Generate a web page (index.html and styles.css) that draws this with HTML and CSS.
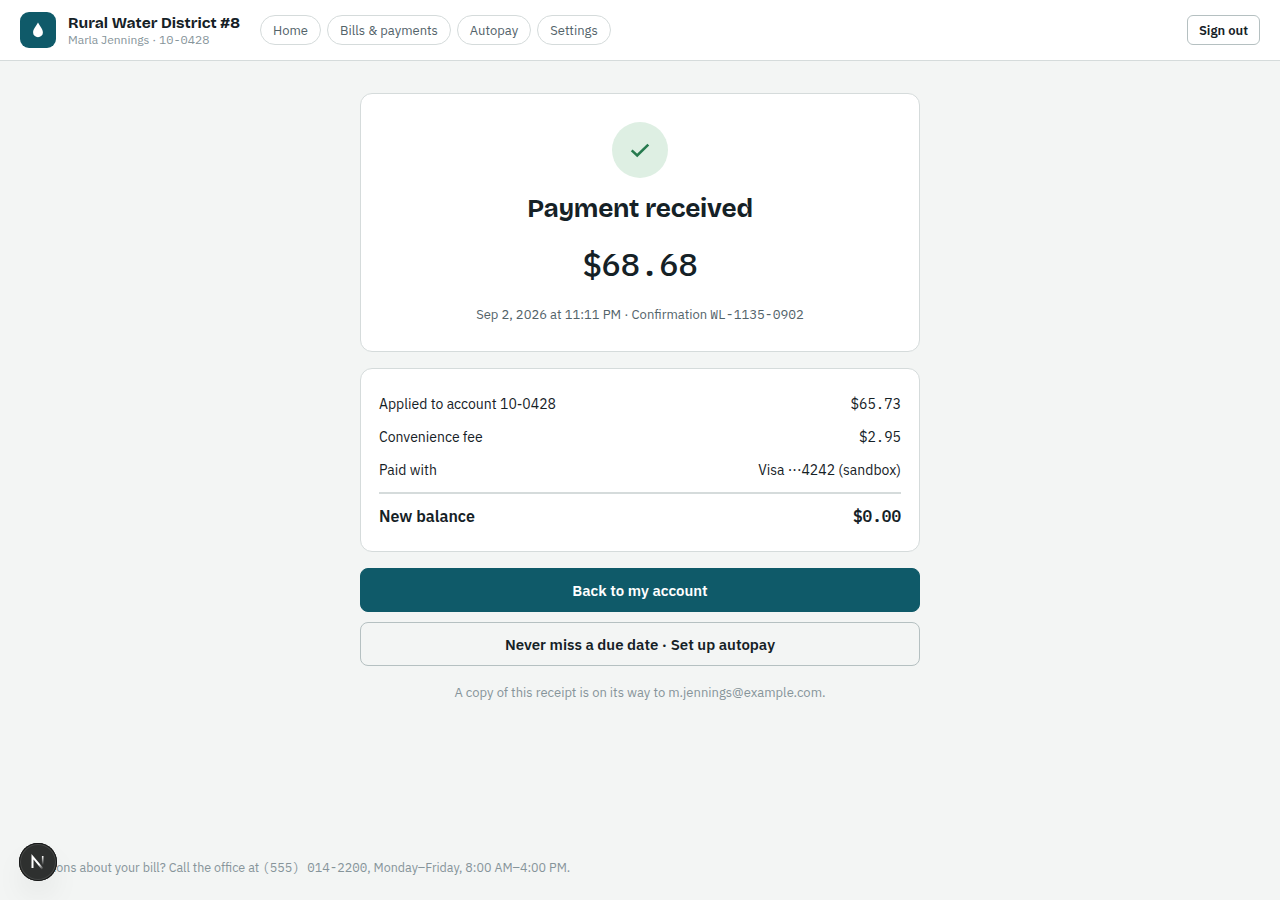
FILE: index.html
```
<!DOCTYPE html>
<html lang="en">
<head>
    <meta charset="UTF-8" />
    <meta name="viewport" content="width=device-width, initial-scale=1" />
    <title>Payment received</title>
    <link rel="stylesheet" href="styles.css">
</head>
<body>
    <header class="header">
        <div class="logo">
            <svg width="10" height="16" viewBox="0 0 10 16"><path d="M5 .6C6.3 3.5 9.900 6.900 9.900 10.400a4.900 4.900 0 0 1-9.800 0C.1 6.900 3.700 3.500 5 .6Z" fill="#fff" /></svg>
        </div>
        <div class="brand">
            <div class="brand-name">Rural Water District #8</div>
            <div class="brand-account">Marla Jennings · <span class="mono">10-0428</span></div>
        </div>
        <nav class="nav">
            <a class="pill home">Home</a>
            <a class="pill bills">Bills &amp; payments</a>
            <a class="pill auto">Autopay</a>
            <a class="pill settings">Settings</a>
        </nav>
        <button class="signout">Sign out</button>
    </header>

    <main class="main">
        <section class="card received">
            <div class="check">
                <svg width="24" height="24" viewBox="0 0 24 24" fill="none" stroke="#267a4e" stroke-width="2.6"><path d="M3.700 12.400 9.200 17.400 20.300 6.600" /></svg>
            </div>
            <h1>Payment received</h1>
            <div class="amount mono">$68.68</div>
            <div class="confirm">Sep 2, 2026 at 11:11 PM · Confirmation <span class="mono">WL-1135-0902</span></div>
        </section>

        <section class="card details">
            <div class="row"><span>Applied to account 10-0428</span><span class="mono">$65.73</span></div>
            <div class="row"><span>Convenience fee</span><span class="mono">$2.95</span></div>
            <div class="row"><span>Paid with</span><span>Visa ···4242 (sandbox)</span></div>
            <div class="row total"><span>New balance</span><span class="mono">$0.00</span></div>
        </section>

        <div class="actions">
            <button class="button primary">Back to my account</button>
            <button class="button outline">Never miss a due date · Set up autopay</button>
        </div>
        <p class="copy">A copy of this receipt is on its way to m.jennings@example.com.</p>
    </main>

    <footer class="footer">Questions about your bill? Call the office at <span class="mono">(555) 014-2200</span>, Monday–Friday, 8:00 AM–4:00 PM.</footer>

    <div class="badge">
        <svg width="38" height="38" viewBox="0 0 38 38" fill="none">
            <defs>
                <linearGradient id="diagonal" x1="18" y1="18" x2="24" y2="26" gradientUnits="userSpaceOnUse"><stop offset=".4" stop-color="#fff" /><stop offset="1" stop-color="#fff" stop-opacity="0" /></linearGradient>
                <linearGradient id="stem" x1="0" y1="13" x2="0" y2="22" gradientUnits="userSpaceOnUse"><stop stop-color="#fff" /><stop offset="1" stop-color="#fff" stop-opacity="0" /></linearGradient>
            </defs>
            <path d="M13.500 25V13.700L23.700 26" stroke="url(#diagonal)" stroke-width="2" />
            <path d="M23.700 13v9" stroke="url(#stem)" stroke-width="1.600" />
        </svg>
    </div>
</body>
</html>
```
FILE: styles.css
```
* {
    box-sizing: border-box;
}
body {
    margin: 0;
    height: 900px;
    display: flex;
    flex-direction: column;
    overflow: hidden;
    background-color: #f3f5f4;
    color: #152126;
    font-family: "IBM Plex Sans", Roboto, sans-serif;
    font-size: 14px;
}
.mono {
    font-family: "IBM Plex Mono", "Liberation Mono", monospace;
}
.header {
    height: 61px;
    display: flex;
    align-items: center;
    padding: 0 20px;
    background-color: #fff;
    border-bottom: 1px solid #d5dbdb;
}
.logo {
    width: 36px;
    height: 36px;
    display: grid;
    place-items: center;
    border-radius: 9px;
    background-color: #0f5a69;
}
.brand {
    width: 204px;
    padding: 2px 0 0 12px;
    white-space: nowrap;
}
.brand-name {
    font-family: "Bricolage Grotesque", Inter, sans-serif;
    font-size: 15.5px;
    font-weight: 700;
    line-height: 18px;
}
.brand-account {
    color: #86949a;
    font-size: 12px;
    line-height: 16px;
}
.nav {
    display: flex;
    gap: 6px;
}
.nav .pill {
    height: 30px;
    padding: 1px 0 0;
    border: 1px solid #d5dbdb;
    border-radius: 15px;
    color: #53636a;
    font-size: 13px;
    line-height: 28px;
    text-align: center;
    white-space: nowrap;
}
.nav .home {
    width: 61px;
}
.nav .bills {
    width: 124px;
}
.nav .auto {
    width: 74px;
}
.nav .settings {
    width: 74px;
}
button {
    color: #152126;
    background: none;
    font-family: inherit;
    font-weight: 600;
    cursor: pointer;
}
.signout {
    width: 73px;
    height: 30px;
    margin-left: auto;
    padding: 0;
    border: 1px solid #b5c0c1;
    border-radius: 6px;
    font-size: 13px;
}
.main {
    width: 560px;
    margin: 32px auto 0;
}
.card {
    border: 1px solid #d5dbdb;
    border-radius: 12px;
    background-color: #fff;
}
.received {
    height: 259px;
    display: flex;
    flex-direction: column;
    align-items: center;
    padding-top: 28px;
}
.check {
    width: 56px;
    height: 56px;
    display: grid;
    place-items: center;
    border-radius: 50%;
    background-color: #deefe3;
}
h1 {
    margin: 15px 0 0;
    font-family: "Bricolage Grotesque", Inter, sans-serif;
    font-size: 26px;
    font-weight: 700;
    line-height: 32px;
    letter-spacing: -0.26px;
}
.amount {
    margin-top: 14px;
    font-size: 32px;
    font-weight: 500;
    line-height: 50px;
}
.confirm {
    margin-top: 16px;
    color: #53636a;
    font-size: 13px;
    line-height: 20px;
}
.details {
    height: 184px;
    margin-top: 16px;
    padding: 18px;
}
.row {
    height: 33px;
    display: flex;
    align-items: center;
    justify-content: space-between;
}
.total {
    height: 46px;
    margin-top: 6px;
    border-top: 2px solid #d5dbdb;
    font-size: 16px;
    font-weight: 600;
}
.actions {
    display: grid;
    gap: 10px;
    margin-top: 16px;
}
.button {
    height: 44px;
    border: 1px solid #b5c0c1;
    border-radius: 8px;
    font-size: 15px;
}
.primary {
    border-color: #0f5a69;
    background-color: #0f5a69;
    color: #fff;
}
.copy {
    margin: 17px 0 0;
    color: #86949a;
    font-size: 13px;
    line-height: 20px;
    text-align: center;
}
.footer {
    margin-top: auto;
    padding: 0 20px 23px;
    color: #86949a;
    font-size: 12.5px;
    line-height: 20px;
    white-space: nowrap;
}
.badge {
    position: fixed;
    left: 19px;
    bottom: 19px;
    width: 38px;
    height: 38px;
    border-radius: 50%;
    background-color: #2e302f;
    box-shadow: inset 0 0 0 1px #151616, inset 0 0 0 2px #454746, 0 16px 32px -8px rgba(0, 0, 0, 0.15);
}
```
